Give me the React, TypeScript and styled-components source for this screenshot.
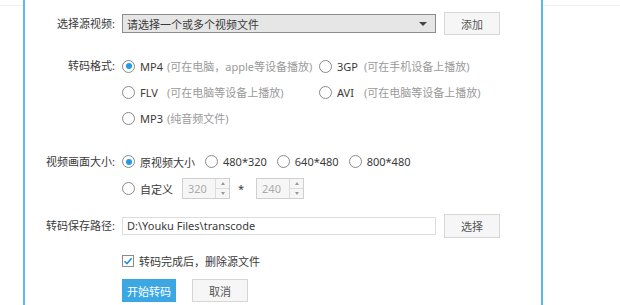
import React from 'react'
import styled, { createGlobalStyle } from 'styled-components'

const GlobalStyle = createGlobalStyle`
	html, body {
		margin: 0;
		padding: 0;
		background: #ffffff;
	}
	body {
		font-family: "Noto Sans", "Noto Sans CJK SC", sans-serif;
		font-size: 11px;
		color: #3a3a3a;
	}
`

const Page = styled.div`
	display: flex;
	width: 620px;
	height: 305px;
	overflow: hidden;
`

const Gutter = styled.div<{ $w?: number }>`
	flex: ${(p) => (p.$w ? `0 0 ${p.$w}px` : '1 1 auto')};
	align-self: flex-start;
	height: 1px;
	margin-top: 5px;
	background: #f0f0f0;
`

const Panel = styled.div`
	flex: 0 0 516px;
	border-left: 2px solid #5ab8f0;
	border-right: 2px solid #5ab8f0;
	background: #ffffff;
	padding-top: 12px;
	display: flex;
	flex-direction: column;
`

const FieldRow = styled.div<{ $mt?: number }>`
	display: grid;
	grid-template-columns: 90px 1fr;
	column-gap: 7px;
	align-items: start;
	margin-top: ${(p) => p.$mt || 0}px;
`

const Label = styled.div<{ $h: number }>`
	text-align: right;
	line-height: ${(p) => p.$h}px;
	height: ${(p) => p.$h}px;
	white-space: nowrap;
`

const Controls = styled.div`
	display: flex;
	flex-direction: column;
`

const Line = styled.div<{ $h: number; $gap?: number }>`
	display: flex;
	align-items: center;
	height: ${(p) => p.$h}px;
	gap: ${(p) => p.$gap || 0}px;
`

const SelectBox = styled.div`
	box-sizing: border-box;
	width: 314px;
	height: 19px;
	border: 1px solid #8c8c8c;
	background: #e6e6e6;
	display: flex;
	align-items: center;
	padding: 0 8px 0 4px;
`

const SelectText = styled.span`
	flex: 1;
`

const Arrow = styled.span`
	width: 0;
	height: 0;
	border-left: 4px solid transparent;
	border-right: 4px solid transparent;
	border-top: 4px solid #444;
`

const Button = styled.button<{ $primary?: boolean; $w?: number; $h?: number }>`
	box-sizing: border-box;
	width: ${(p) => p.$w || 56}px;
	height: ${(p) => p.$h || 23}px;
	padding: 0;
	font-family: inherit;
	font-size: 11px;
	border: 1px solid ${(p) => (p.$primary ? '#3aa6e2' : '#d6d6d6')};
	background: ${(p) => (p.$primary ? '#3ba7e3' : '#f6f6f6')};
	color: ${(p) => (p.$primary ? '#ffffff' : '#555555')};
`

const FormatGrid = styled.div`
	display: grid;
	grid-template-columns: 197px auto;
	grid-auto-rows: 26px;
	align-items: center;
`

const Option = styled.label`
	display: inline-flex;
	align-items: center;
	white-space: nowrap;
`

const Radio = styled.span<{ $checked?: boolean }>`
	box-sizing: border-box;
	width: 13px;
	height: 13px;
	border-radius: 50%;
	border: 1px solid #8a8a8a;
	background: #fff;
	margin-right: 5px;
	display: inline-flex;
	align-items: center;
	justify-content: center;
	&::after {
		content: '';
		display: ${(p) => (p.$checked ? 'block' : 'none')};
		width: 6px;
		height: 6px;
		border-radius: 50%;
		background: #1c9ceb;
	}
`

const Name = styled.span<{ $w?: number }>`
	min-width: ${(p) => p.$w || 0}px;
`

const Hint = styled.span`
	color: #9a9a9a;
`

const Spinner = styled.div`
	box-sizing: border-box;
	width: 48px;
	height: 21px;
	border: 1px solid #cfcfcf;
	background: #f6f6f6;
	display: flex;
`

const SpinValue = styled.span`
	flex: 1;
	color: #ababab;
	padding-left: 5px;
	line-height: 19px;
`

const SpinButtons = styled.div`
	width: 13px;
	border-left: 1px solid #dcdcdc;
	display: flex;
	flex-direction: column;
`

const SpinHalf = styled.span<{ $down?: boolean }>`
	flex: 1;
	display: flex;
	align-items: center;
	justify-content: center;
	border-top: ${(p) => (p.$down ? '1px solid #dcdcdc' : 'none')};
	&::after {
		content: '';
		width: 0;
		height: 0;
		border-left: 2.5px solid transparent;
		border-right: 2.5px solid transparent;
		${(p) => (p.$down ? 'border-top: 3px solid #999;' : 'border-bottom: 3px solid #999;')}
	}
`

const Times = styled.span`
	margin: 0 12px 0 8px;
`

const PathInput = styled.div`
	box-sizing: border-box;
	width: 314px;
	height: 18px;
	border: 1px solid #dddddd;
	padding-left: 4px;
	line-height: 16px;
`

const CheckBox = styled.span`
	box-sizing: border-box;
	width: 12px;
	height: 12px;
	border: 1px solid #8a8a8a;
	background: #fff;
	margin-right: 5px;
	display: inline-flex;
	align-items: center;
	justify-content: center;
`

const Footer = styled.div`
	display: flex;
	gap: 16px;
	margin-top: 10px;
	margin-left: 97px;
`

const SizeOption = ({ label, checked }: { label: string; checked?: boolean }) => (
	<Option>
		<Radio $checked={checked} />
		<Name>{label}</Name>
	</Option>
)

const SpinBox = ({ value }: { value: string }) => (
	<Spinner>
		<SpinValue>{value}</SpinValue>
		<SpinButtons>
			<SpinHalf />
			<SpinHalf $down />
		</SpinButtons>
	</Spinner>
)

const App = () => {
	return (
		<>
			<GlobalStyle />
			<Page>
				<Gutter $w={23} />
				<Panel>
					<FieldRow>
						<Label $h={23}>选择源视频:</Label>
						<Line $h={23} $gap={8}>
							<SelectBox>
								<SelectText>请选择一个或多个视频文件</SelectText>
								<Arrow />
							</SelectBox>
							<Button>添加</Button>
						</Line>
					</FieldRow>

					<FieldRow $mt={18}>
						<Label $h={26}>转码格式:</Label>
						<FormatGrid>
							<Option>
								<Radio $checked />
								<Name $w={27}>MP4</Name>
								<Hint>(可在电脑，apple等设备播放)</Hint>
							</Option>
							<Option>
								<Radio />
								<Name $w={27}>3GP</Name>
								<Hint>(可在手机设备上播放)</Hint>
							</Option>
							<Option>
								<Radio />
								<Name $w={27}>FLV</Name>
								<Hint>(可在电脑等设备上播放)</Hint>
							</Option>
							<Option>
								<Radio />
								<Name $w={27}>AVI</Name>
								<Hint>(可在电脑等设备上播放)</Hint>
							</Option>
							<Option>
								<Radio />
								<Name $w={27}>MP3</Name>
								<Hint>(纯音频文件)</Hint>
							</Option>
						</FormatGrid>
					</FieldRow>

					<FieldRow $mt={17}>
						<Label $h={27}>视频画面大小:</Label>
						<Controls>
							<Line $h={27} $gap={10}>
								<SizeOption label="原视频大小" checked />
								<SizeOption label="480*320" />
								<SizeOption label="640*480" />
								<SizeOption label="800*480" />
							</Line>
							<Line $h={27}>
								<Option>
									<Radio />
									<Name $w={42}>自定义</Name>
								</Option>
								<SpinBox value="320" />
								<Times>*</Times>
								<SpinBox value="240" />
							</Line>
						</Controls>
					</FieldRow>

					<FieldRow $mt={12}>
						<Label $h={24}>转码保存路径:</Label>
						<Line $h={24} $gap={8}>
							<PathInput>D:\Youku Files\transcode</PathInput>
							<Button $h={24}>选择</Button>
						</Line>
					</FieldRow>

					<FieldRow $mt={15}>
						<span />
						<Line $h={16}>
							<CheckBox>
								<svg width="10" height="10" viewBox="0 0 10 10">
									<path d="M1.5 5.2 L4 7.6 L8.6 2.2" fill="none" stroke="#1a8fe0" strokeWidth="1.5" />
								</svg>
							</CheckBox>
							<span>转码完成后，删除源文件</span>
						</Line>
					</FieldRow>

					<Footer>
						<Button $primary $w={54}>开始转码</Button>
						<Button>取消</Button>
					</Footer>
				</Panel>
				<Gutter />
			</Page>
		</>
	)
}

export default App
